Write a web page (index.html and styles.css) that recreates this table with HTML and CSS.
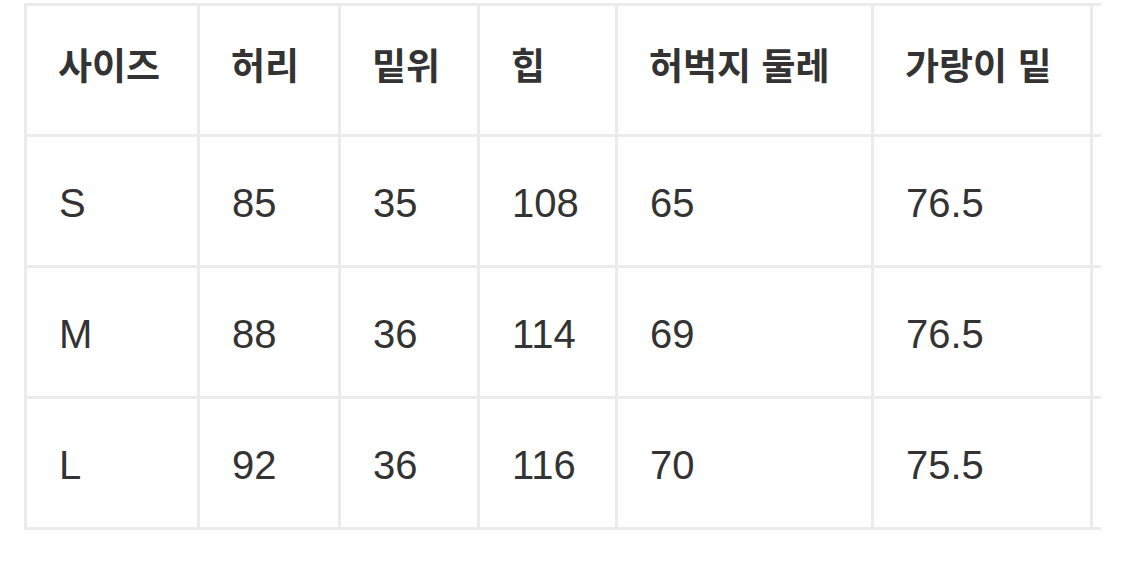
FILE: index.html
```html
<!DOCTYPE html>
<html lang="ko">
<head>
<meta charset="utf-8">
<title>사이즈</title>
<link rel="stylesheet" href="styles.css">
</head>
<body>
<div class="wrap">
  <table class="size-table">
    <thead>
      <tr>
        <th class="c1">사이즈</th>
        <th class="c2">허리</th>
        <th class="c3">밑위</th>
        <th class="c4">힙</th>
        <th class="c5">허벅지 둘레</th>
        <th class="c6">가랑이 밑</th>
        <th class="c7"></th>
      </tr>
    </thead>
    <tbody>
      <tr><td>S</td><td>85</td><td>35</td><td>108</td><td>65</td><td>76.5</td><td></td></tr>
      <tr><td>M</td><td>88</td><td>36</td><td>114</td><td>69</td><td>76.5</td><td></td></tr>
      <tr><td>L</td><td>92</td><td>36</td><td>116</td><td>70</td><td>75.5</td><td></td></tr>
    </tbody>
  </table>
</div>
</body>
</html>
```

FILE: styles.css
```css
html, body {
  margin: 0;
  padding: 0;
  background: #ffffff;
}

.wrap {
  margin: 3px 0 0 24px;
  width: 1077px;
  overflow: hidden;
}

.size-table {
  border-collapse: separate;
  border-spacing: 0;
  table-layout: fixed;
  width: 1269px;
  border-top: 3px solid #ebebeb;
  border-left: 3px solid #ebebeb;
  font-family: "Liberation Sans", "Noto Sans CJK KR", sans-serif;
  color: #333333;
}

.size-table th,
.size-table td {
  box-sizing: border-box;
  height: 131px;
  padding: 0 0 0 31px;
  border-right: 3px solid #ebebeb;
  border-bottom: 3px solid #ebebeb;
  text-align: left;
  vertical-align: middle;
  white-space: nowrap;
}

.size-table th {
  font-size: 37px;
  font-weight: 700;
  padding-bottom: 12px;
}

.size-table td {
  font-size: 40px;
  font-weight: 400;
  padding-left: 32px;
  padding-top: 4px;
}

.c1 { width: 173px; }
.c2 { width: 141px; }
.c3 { width: 139px; }
.c4 { width: 138px; }
.c5 { width: 256px; }
.c6 { width: 219px; }
.c7 { width: 200px; }
```
